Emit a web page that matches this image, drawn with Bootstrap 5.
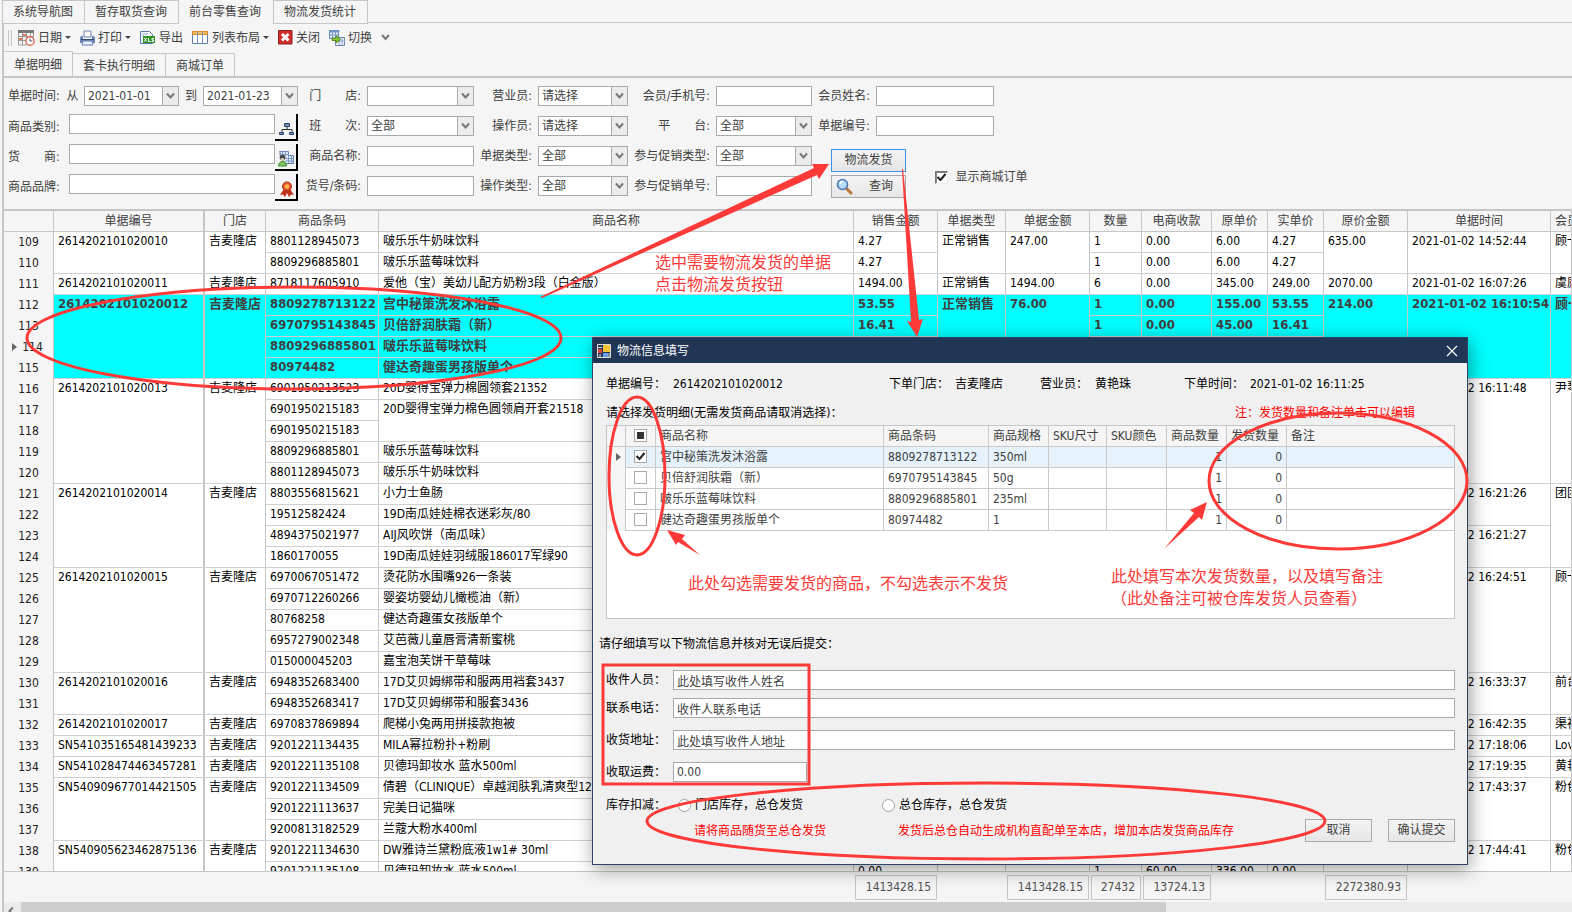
<!DOCTYPE html>
<html lang="zh-CN">
<head>
<meta charset="utf-8">
<meta name="viewport" content="width=device-width, initial-scale=1">
<title>前台零售查询</title>
<link href="https://cdn.jsdelivr.net/npm/bootstrap@5.3.0/dist/css/bootstrap.min.css" rel="stylesheet">
<style>
  :root { --line: #c6c6c6; --field: #a9a9a9; --ink: #404040; --mark-red: #fd3a37; }
  body { font-family: "DejaVu Sans Condensed", "Noto Sans CJK SC", sans-serif; font-size: 12px; line-height: 18px; color: var(--ink); background: #f5f5f5; overflow: hidden; }
  svg { flex: none; }

  /* window tabs */
  .win-tabs { height: 23px; padding-left: 2px; }
  .win-tabs::after { content: ""; flex: 1; border-bottom: 1px solid var(--line); }
  .win-tabs .nav-link, .sub-tabs .nav-link { color: var(--ink); border: 1px solid var(--line); border-radius: 0; padding: 0 10px; line-height: 22px; white-space: nowrap; }
  .win-tabs .nav-link { padding-right: 11px; }
  .win-tabs .nav-item + .nav-item .nav-link { border-left-width: 0; }
  .win-tabs .nav-item.seam .nav-link { border-left-width: 1px; }
  .win-tabs .nav-link.active { border-color: transparent; background: none; }

  /* tool bar */
  .tool-strip, .sub-tabs, .work-area { margin-left: 2px; border-left: 2px solid var(--line); }
  .tool-strip { height: 28px; padding: 2px 0 0 16px; gap: 9px; }
  .tool-strip .grip { width: 4px; height: 16px; border: solid var(--line); border-width: 0 1px; margin-left: -12px; margin-right: -3px; }
  .tool-btn { border: 0; background: none; padding: 0; display: flex; align-items: center; gap: 3px; color: var(--ink); line-height: 18px; }
  .drop-mark { border: 3px solid transparent; border-top-color: #444; border-bottom: 0; }

  .sub-tabs { height: 25px; align-items: flex-end; }
  .sub-tabs .nav-link { padding-top: 2px; line-height: 20px; border-bottom: 0; border-left-width: 0; }
  .sub-tabs .nav-link.active { line-height: 22px; background: none; }

  .work-area { border-top: 2px solid var(--line); min-height: 0; }

  /* filters */
  .filters { padding: 3px 0 8px 4px; }
  .f-row { height: 30px; display: flex; align-items: center; white-space: nowrap; }
  .f-row.top { align-items: flex-start; padding-top: 3px; }
  .f-row.top label { line-height: 26px; width: 61px; }
  .f-row.end { justify-content: flex-end; }
  .f-row.end label { margin-right: 6px; }
  .f-from { width: 76px; }
  .f-to { width: 24px; text-align: center; }
  .g-dates { width: 290px; } .g-shop { width: 176px; } .g-staff { width: 154px; } .g-member { width: 184px; } .g-buyer { width: 182px; }
  .f-cmds { padding: 8px 0 0 19px; gap: 29px; }
  .f-cmds .stack { gap: 3px; }
  .box { height: 20px; border: 1px solid var(--field); border-radius: 0; background-color: #fff; color: var(--ink); padding: 0 3px; line-height: 18px; font-size: 12px; }
  select.box { appearance: none; padding-right: 18px; background: url("data:image/svg+xml,%3Csvg xmlns='http://www.w3.org/2000/svg' width='16' height='18'%3E%3Crect width='16' height='18' fill='%23ececec'/%3E%3Cpath d='M.5 0v18' stroke='%23a9a9a9'/%3E%3Cpath d='M5 6.500l3.500 4 3.500-4' fill='none' stroke='%23777' stroke-width='2'/%3E%3C/svg%3E") right center no-repeat #fff; }
  .w-date { width: 95px; } .w-long { width: 206px; } .w-shop { width: 107px; } .w-staff { width: 90px; } .w-member { width: 96px; } .w-name { width: 118px; }
  .pick { width: 23px; height: 27px; border: solid #000; border-width: 0 2px 2px 0; background: #f5f5f5; padding: 5px 0 0 2px; display: flex; align-items: center; justify-content: center; }
  .cmd { border: 1px solid #a9a9a9; border-radius: 0; background: linear-gradient(#f4f4f4, #e6e6e6); color: var(--ink); font-size: 12px; line-height: 21px; height: 23px; padding: 0; }
  .cmd.hot { border-color: #3c94ea; }
  .cmd-wide { width: 75px; }
  .tick { appearance: none; margin: 0; width: 13px; height: 13px; border: 1px solid #a9a9a9; background: #fff center no-repeat; }
  .tick:checked { background-image: url("data:image/svg+xml,%3Csvg xmlns='http://www.w3.org/2000/svg' width='11' height='11'%3E%3Cpath d='M1.500 5l3 3L9.500 2' fill='none' stroke='%23222' stroke-width='2'/%3E%3C/svg%3E"); }
  .tick.partial { background-image: linear-gradient(#333, #333); background-size: 7px 7px; }
  .tick.sunk { border-color: #777 #eee #eee #777; box-shadow: inset 1px 1px #888; }

  /* order grid */
  .grid-wrap { border-top: 2px solid var(--line); min-height: 0; overflow: hidden; }
  .order-grid { table-layout: fixed; width: 100%; border-collapse: separate; border-spacing: 0; }
  .order-grid th, .order-grid td { height: 21px; padding: 0 4px; line-height: 18px; vertical-align: top; border: solid var(--line); border-width: 0 1px 1px 0; background: #fff; color: #000; font-weight: 400; white-space: nowrap; overflow: hidden; }
  .order-grid td { border-color: #d0d0d0; border-right-color: var(--line); }
  .order-grid th { background: #f5f5f5; color: var(--ink); text-align: center; padding: 0; line-height: 20px; }
  .order-grid tbody th { border-bottom: 0; line-height: 21px; color: #222; }
  .order-grid .pin { border-right-width: 2px; }
  .order-grid .chosen td { background: #0ff; color: #404040; font-weight: 700; font-size: 13px; }
  .c-no { width: 50px; } .c-id { width: 151px; } .c-shop { width: 61px; } .c-code { width: 113px; } .c-84 { width: 84px; } .c-type { width: 68px; } .c-qty { width: 52px; } .c-card { width: 70px; } .c-price { width: 56px; } .c-time { width: 143px; } .c-last { width: 21px; }
  .row-mark { float: left; margin: 6px -5px 0 8px; border: 4px solid transparent; border-left: 5px solid #666; border-right: 0; }

  .sums { border-top: 1px solid var(--line); height: 32px; }
  .sums table { table-layout: fixed; }
  .sums td { padding: 3px 0 0 1px; height: 28px; }
  .sums .total { display: block; height: 25px; line-height: 23px; border: 1px solid var(--line); text-align: right; padding-right: 5px; margin-right: 1px; color: #505050; }
  .h-scroll { height: 10px; background: #ebebeb; overflow: hidden; }
  .h-scroll .thumb { width: 73%; background: #cdcdcd; }

  /* dialog */
  .ship-dialog { position: absolute; left: 592px; top: 337px; width: 876px; border: 1px solid #2b4467; background: #f0f0f0; color: #000; box-shadow: 2px 4px 18px rgba(0, 0, 0, .4); }
  .ship-title { height: 25px; gap: 6px; background: #213555; color: #fff; padding: 0 9px 0 4px; }
  .ship-title button { border: 0; background: none; padding: 0; line-height: 1; }
  .ship-body { padding: 0 12px 22px 13px; }
  .facts { height: 42px; display: grid; align-items: center; grid-template-columns: 67px 216px 66px 85px 55px 89px 66px 1fr; }
  .facts span { white-space: nowrap; }
  .line-16 { line-height: 16px; }
  .pure-red { color: #f00; }
  .tip { margin-right: 40px; }
  .goods-wrap { border: 1px solid var(--line); background: #fff; height: 194px; margin-top: 4px; }
  .goods { table-layout: fixed; width: 100%; border-collapse: separate; border-spacing: 0; color: var(--ink); }
  .goods th, .goods td { height: 21px; line-height: 20px; padding: 0 4px; border: solid #c9c9c9; border-width: 0 1px 1px 0; font-weight: 400; white-space: nowrap; overflow: hidden; vertical-align: top; }
  .goods th { background: #f5f5f5; }
  .goods tr > :last-child { border-right: 0; }
  .goods tbody th { border-bottom: 0; padding: 0; }
  .goods .now td { background: #e5f1fb; }
  .goods .num { text-align: right; }
  .goods .pickbox { padding: 3px 0 0; text-align: center; line-height: 1; }
  .goods .row-mark { margin-left: 9px; }
  .g-mark { width: 19px; } .g-box { width: 30px; } .g-name { width: 228px; } .g-code { width: 105px; } .g-60 { width: 60px; } .g-58 { width: 58px; }
  .ask { margin: 17px 0 18px -7px; }
  .ship-row { display: flex; align-items: center; height: 20px; margin-bottom: 12px; }
  .ship-row label { width: 67px; }
  .ship-row .box { flex: 1; }
  .ship-row .w-fee { flex: none; width: 134px; }
  .stock { display: grid; grid-template-columns: 72px 204px 1fr; row-gap: 5px; margin-top: 14px; align-items: center; }
  .stock label { margin-left: 4px; }
  .stock .hint { padding-left: 16px; white-space: nowrap; }
  .dot { appearance: none; margin: 0; width: 13px; height: 13px; border: 1px solid #a0a0a0; border-radius: 50%; background: #fff; }
  .cmd-ship { width: 67px; }

  /* hand-drawn notes over the window */
  .notes { position: absolute; left: 0; top: 0; pointer-events: none; font-family: "Noto Sans CJK SC", sans-serif; font-size: 16px; }
  .notes .ring { fill: none; stroke: var(--mark-red); stroke-width: 3; }
  .notes .solid { fill: var(--mark-red); }
</style>
</head>
<body>
<div class="d-flex flex-column vh-100 position-relative overflow-hidden">

  <ul class="nav flex-nowrap win-tabs">
    <li class="nav-item"><a class="nav-link" href="#">系统导航图</a></li>
    <li class="nav-item"><a class="nav-link" href="#">暂存取货查询</a></li>
    <li class="nav-item"><a class="nav-link active" href="#">前台零售查询</a></li>
    <li class="nav-item seam"><a class="nav-link" href="#">物流发货统计</a></li>
  </ul>

  <div class="tool-strip d-flex align-items-center" role="toolbar">
    <span class="grip"></span>
    <button class="tool-btn" type="button">
      <svg width="17" height="16" viewBox="0 0 17 16"><path d="M0 0h16v3H0z" fill="#777"/><path d="M.5 3v12H9M.500 6.500h15M.500 10.500h8M4.500 3v12M8.500 3v9M12.500 3v4M15.500 3v4" fill="none" stroke="#999"/><path d="M5 4h3v2H5zM1 8h3v2H1z" fill="#e2765c"/><circle cx="12" cy="11" r="4.200" fill="#fff" stroke="#d96d55" stroke-width="1.400"/><path d="M12 8.500V11h2.500" fill="none" stroke="#555"/></svg>
      日期 <span class="drop-mark"></span></button>
    <button class="tool-btn" type="button">
      <svg width="15" height="16" viewBox="0 0 15 16"><path d="M4 1h7v6H4z" fill="#fff" stroke="#6780b0"/><path d="M1 6h2v3h9V6h2l1 2v5H0V8z" fill="#6d86b4"/><path d="M1 9h13v1H1z" fill="#304a79"/><path d="M3 11h9l1 4H2z" fill="#e9f0fb" stroke="#6780b0"/></svg>
      打印 <span class="drop-mark"></span></button>
    <button class="tool-btn" type="button">
      <svg width="16" height="16" viewBox="0 0 16 16"><path d="M.5 1.500h9l3 3v9H.5z" fill="#f4f8fd" stroke="#5878a8"/><path d="M2 4h6M2 6h2" stroke="#9ab1d2"/><path d="M3 6h12v7H3z" fill="#2f9128"/><path d="M4.500 8l2 3.500m0-3.500l-2 3.500M8.500 8v3.500h2M14 8.500h-2v1.500h1.500v1.500H11.500" fill="none" stroke="#fff"/></svg>
      导出</button>
    <button class="tool-btn" type="button">
      <svg width="17" height="14" viewBox="0 0 17 14"><path d="M.5.500h15v12H.5z" fill="#fff" stroke="#5c7cab"/><path d="M0 0h16v4H0z" fill="#d98c2e"/><path d="M1 1h14v2H1z" fill="#f4bd68"/><path d="M5.500 1v12M10.500 1v12" stroke="#7793bd"/></svg>
      列表布局 <span class="drop-mark"></span></button>
    <button class="tool-btn" type="button">
      <svg width="15" height="15" viewBox="0 0 15 15"><path d="M.5.500h13.500v13.500H.5z" fill="#cf2f29" stroke="#8e211d"/><path d="M4 4l6.500 6.500M10.500 4L4 10.500" stroke="#fff" stroke-width="3"/></svg>
      关闭</button>
    <button class="tool-btn" type="button">
      <svg width="16" height="16" viewBox="0 0 16 16"><path d="M.5.500h9v8h-9z" fill="#dce8f8" stroke="#5d84bb"/><path d="M0 0h10v2H0zM.500 5h9M3.500 1v7M6.500 1v7" fill="#5d84bb" stroke="#7c9dcb"/><path d="M6.500 7.500h9v8h-9z" fill="#eef3fb" stroke="#6b86b0"/><path d="M7 11h9M10 8v7M13 8v7" stroke="#8ba4cb"/><path d="M3 8h4V5.500l4.500 4L7 13v-2.500H3z" fill="#86c82f" stroke="#477a12" stroke-width=".8"/></svg>
      切换</button>
    <svg width="9" height="7" viewBox="0 0 9 7"><path d="M1 1l3.500 4L8 1" fill="none" stroke="#777" stroke-width="2"/></svg>
  </div>

  <ul class="nav flex-nowrap sub-tabs">
    <li class="nav-item"><a class="nav-link active" href="#">单据明细</a></li>
    <li class="nav-item"><a class="nav-link" href="#">套卡执行明细</a></li>
    <li class="nav-item"><a class="nav-link" href="#">商城订单</a></li>
  </ul>

  <main class="work-area d-flex flex-column flex-grow-1">
    <form class="filters d-flex">
      <div class="g-dates">
        <div class="f-row">
          <label class="f-from" for="d1">单据时间:&nbsp; 从</label>
          <select class="box w-date" id="d1"><option>2021-01-01</option></select>
          <label class="f-to" for="d2">到</label>
          <select class="box w-date" id="d2"><option>2021-01-23</option></select>
        </div>
        <div class="f-row top">
          <label for="kind">商品类别:</label><input class="box w-long" id="kind" type="text">
          <button class="pick" type="button" aria-label="选择类别"><svg width="16" height="14" viewBox="0 0 16 14"><path d="M8 4v4M3 10V7.500h10V10" fill="none" stroke="#333"/><path d="M5.500 1.500h5v3h-5zM.500 10.500h4v2h-4zM10.500 10.500h4v2h-4z" fill="#7193bf" stroke="#2c4568"/></svg></button>
        </div>
        <div class="f-row top">
          <label for="vendor">货　　商:</label><input class="box w-long" id="vendor" type="text">
          <button class="pick" type="button" aria-label="选择货商"><svg width="17" height="17" viewBox="0 0 17 17"><path d="M1.500 1.500h9v4h5v8h-9z" fill="#dfe9f7" stroke="#627ea9"/><path d="M1 4.500h10M7 8.500h9M7 11h9M4.500 1v5M7.500 1v5M10.500 5v8M13.500 5v8" stroke="#7f9ac4"/><circle cx="4.500" cy="7.500" r="2.800" fill="#444"/><path d="M3 8h3v3H3z" fill="#d9c4ae"/><path d="M.5 16c0-6 8-6 8 0z" fill="#7cc760" stroke="#3d8a2b"/></svg></button>
        </div>
        <div class="f-row top">
          <label for="brand">商品品牌:</label><input class="box w-long" id="brand" type="text">
          <button class="pick" type="button" aria-label="选择品牌"><svg width="16" height="16" viewBox="0 0 16 16"><path d="M5 8L1 14l3-.5L6 16l2-4 2 4 2-2.500 3 .5-4-6z" fill="#c2321b"/><circle cx="8" cy="5.500" r="4.500" fill="#e2552d" stroke="#a52b12"/><circle cx="8" cy="5.500" r="2.300" fill="#f7bb4a"/></svg></button>
        </div>
      </div>
      <div class="g-shop">
        <div class="f-row end"><label for="shop">门　　店:</label><select class="box w-shop" id="shop"><option></option></select></div>
        <div class="f-row end"><label for="shift">班　　次:</label><select class="box w-shop" id="shift"><option>全部</option></select></div>
        <div class="f-row end"><label for="gname">商品名称:</label><input class="box w-shop" id="gname" type="text"></div>
        <div class="f-row end"><label for="gcode">货号/条码:</label><input class="box w-shop" id="gcode" type="text"></div>
      </div>
      <div class="g-staff">
        <div class="f-row end"><label for="s1">营业员:</label><select class="box w-staff" id="s1"><option>请选择</option></select></div>
        <div class="f-row end"><label for="s2">操作员:</label><select class="box w-staff" id="s2"><option>请选择</option></select></div>
        <div class="f-row end"><label for="s3">单据类型:</label><select class="box w-staff" id="s3"><option>全部</option></select></div>
        <div class="f-row end"><label for="s4">操作类型:</label><select class="box w-staff" id="s4"><option>全部</option></select></div>
      </div>
      <div class="g-member">
        <div class="f-row end"><label for="m1">会员/手机号:</label><input class="box w-member" id="m1" type="text"></div>
        <div class="f-row end"><label for="m2">平　　台:</label><select class="box w-member" id="m2"><option>全部</option></select></div>
        <div class="f-row end"><label for="m3">参与促销类型:</label><select class="box w-member" id="m3"><option>全部</option></select></div>
        <div class="f-row end"><label for="m4">参与促销单号:</label><input class="box w-member" id="m4" type="text"></div>
      </div>
      <div class="g-buyer">
        <div class="f-row end"><label for="n1">会员姓名:</label><input class="box w-name" id="n1" type="text"></div>
        <div class="f-row end"><label for="n2">单据编号:</label><input class="box w-name" id="n2" type="text"></div>
        <div class="f-cmds d-flex align-items-center">
          <div class="stack d-flex flex-column">
            <button class="cmd cmd-wide hot" type="button">物流发货</button>
            <button class="cmd cmd-wide d-flex align-items-center" type="button">
              <svg class="ms-1 me-3" width="17" height="17" viewBox="0 0 17 17"><path d="M10 10l5 5" stroke="#b8763a" stroke-width="3" stroke-linecap="round"/><circle cx="6.500" cy="6.500" r="5" fill="#b7dcf8" stroke="#4a78b4" stroke-width="1.600"/><path d="M4 6a3 3 0 0 1 3-2.500" stroke="#fff" fill="none" stroke-width="1.500"/></svg>查询</button>
          </div>
          <div class="d-flex align-items-center text-nowrap pt-2">
            <input class="tick sunk me-1" type="checkbox" id="mall" checked><label for="mall">&nbsp;显示商城订单</label>
          </div>
        </div>
      </div>
    </form>

    <div class="grid-wrap flex-grow-1">
      <table class="order-grid">
        <colgroup><col class="c-no"><col class="c-id"><col class="c-shop"><col class="c-code"><col><col class="c-84"><col class="c-type"><col class="c-84"><col class="c-qty"><col class="c-card"><col class="c-price"><col class="c-price"><col class="c-84"><col class="c-time"><col class="c-last"></colgroup>
        <thead><tr><th></th><th class="pin">单据编号</th><th>门店</th><th>商品条码</th><th>商品名称</th><th>销售金额</th><th>单据类型</th><th>单据金额</th><th>数量</th><th>电商收款</th><th>原单价</th><th>实单价</th><th>原价金额</th><th>单据时间</th><th class="text-start ps-1">会员</th></tr></thead>
        <tbody id="orders"></tbody>
      </table>
    </div>

    <div class="sums">
      <table class="w-100">
        <colgroup><col class="c-no"><col class="c-id"><col class="c-shop"><col class="c-code"><col><col class="c-84"><col class="c-type"><col class="c-84"><col class="c-qty"><col class="c-card"><col class="c-price"><col class="c-price"><col class="c-84"><col class="c-time"><col class="c-last"></colgroup>
        <tbody><tr><td></td><td></td><td></td><td></td><td></td><td><span class="total">1413428.15</span></td><td></td><td><span class="total">1413428.15</span></td><td><span class="total">27432</span></td><td><span class="total">13724.13</span></td><td></td><td></td><td><span class="total">2272380.93</span></td><td></td><td></td></tr></tbody>
      </table>
    </div>
    <div class="h-scroll d-flex">
      <svg width="17" height="10" viewBox="0 0 17 10"><path d="M9 5.500L5.500 9 9 12.500" fill="none" stroke="#777" stroke-width="2"/></svg>
      <div class="thumb"></div>
    </div>
  </main>

  <section class="ship-dialog" role="dialog" aria-labelledby="ship-name">
    <header class="ship-title d-flex align-items-center">
      <svg width="14" height="14" viewBox="0 0 14 14"><path d="M.5.500h13v13H.5z" fill="#26385a" stroke="#ddd"/><path d="M6 1h7v7H6z" fill="#f5c330"/><path d="M1 5h4v4H1z" fill="#d94436"/><path d="M6 9h5v4H6z" fill="#6f9fe8"/><path d="M1 3.500h4M3 10v3M12 9v4" stroke="#ddd"/></svg>
      <span id="ship-name">物流信息填写</span>
      <button class="ms-auto" type="button" aria-label="关闭"><svg width="12" height="12" viewBox="0 0 12 12"><path d="M1 1l10 10M11 1L1 11" stroke="#fff" stroke-width="1.200"/></svg></button>
    </header>
    <div class="ship-body">
      <div class="facts"><span>单据编号：</span><span>2614202101020012</span><span>下单门店：</span><span>吉麦隆店</span><span>营业员：</span><span>黄艳珠</span><span>下单时间：</span><span>2021-01-02 16:11:25</span></div>
      <div class="d-flex justify-content-between line-16"><span>请选择发货明细(无需发货商品请取消选择)：</span><span class="pure-red tip">注：发货数量和备注单击可以编辑</span></div>
      <div class="goods-wrap">
        <table class="goods">
          <colgroup><col class="g-mark"><col class="g-box"><col class="g-name"><col class="g-code"><col class="g-60"><col class="g-58"><col class="g-60"><col class="g-60"><col class="g-60"><col></colgroup>
          <thead><tr><th></th><th class="pickbox"><input class="tick partial" type="checkbox" aria-label="全选"></th><th>商品名称</th><th>商品条码</th><th>商品规格</th><th>SKU尺寸</th><th>SKU颜色</th><th>商品数量</th><th>发货数量</th><th>备注</th></tr></thead>
          <tbody>
            <tr class="now"><th><span class="row-mark"></span></th><td class="pickbox"><input class="tick" type="checkbox" aria-label="宫中秘策洗发沐浴露" checked></td><td>宫中秘策洗发沐浴露</td><td>8809278713122</td><td>350ml</td><td></td><td></td><td class="num">1</td><td class="num">0</td><td></td></tr>
            <tr><th></th><td class="pickbox"><input class="tick" type="checkbox" aria-label="贝倍舒润肤霜"></td><td>贝倍舒润肤霜（新）</td><td>6970795143845</td><td>50g</td><td></td><td></td><td class="num">1</td><td class="num">0</td><td></td></tr>
            <tr><th></th><td class="pickbox"><input class="tick" type="checkbox" aria-label="啵乐乐蓝莓味饮料"></td><td>啵乐乐蓝莓味饮料</td><td>8809296885801</td><td>235ml</td><td></td><td></td><td class="num">1</td><td class="num">0</td><td></td></tr>
            <tr><th></th><td class="pickbox"><input class="tick" type="checkbox" aria-label="健达奇趣蛋男孩版单个"></td><td>健达奇趣蛋男孩版单个</td><td>80974482</td><td>1</td><td></td><td></td><td class="num">1</td><td class="num">0</td><td></td></tr>
          </tbody>
        </table>
      </div>
      <p class="ask line-16">请仔细填写以下物流信息并核对无误后提交：</p>
      <div class="ship-row mb-2"><label for="r1">收件人员：</label><input class="box" id="r1" type="text" value="此处填写收件人姓名"></div>
      <div class="ship-row"><label for="r2">联系电话：</label><input class="box" id="r2" type="text" value="收件人联系电话"></div>
      <div class="ship-row"><label for="r3">收货地址：</label><input class="box" id="r3" type="text" value="此处填写收件人地址"></div>
      <div class="ship-row mb-0"><label for="r4">收取运费：</label><input class="box w-fee" id="r4" type="text" value="0.00"></div>
      <div class="stock">
        <span>库存扣减：</span>
        <div class="d-flex align-items-center"><input class="dot" type="radio" name="stock" id="k1"><label for="k1">门店库存，总仓发货</label></div>
        <div class="d-flex align-items-center"><input class="dot" type="radio" name="stock" id="k2"><label for="k2">总仓库存，总仓发货</label></div>
        <span></span>
        <span class="hint pure-red">请将商品随货至总仓发货</span>
        <div class="d-flex align-items-center">
          <span class="hint pure-red me-auto">发货后总仓自动生成机构直配单至本店，增加本店发货商品库存</span>
          <button class="cmd cmd-ship me-3" type="button">取消</button>
          <button class="cmd cmd-ship" type="button">确认提交</button>
        </div>
      </div>
    </div>
  </section>

  <svg class="notes" width="1572" height="912" viewBox="0 0 1572 912">
    <ellipse class="ring" cx="294" cy="338" rx="267" ry="51"/>
    <ellipse class="ring" cx="637" cy="476" rx="28" ry="79"/>
    <ellipse class="ring" cx="1338" cy="481" rx="129" ry="68"/>
    <ellipse class="ring" cx="986" cy="821" rx="339" ry="38"/>
    <rect class="ring" x="603" y="665" width="206" height="119"/>
    <g class="solid">
      <path d="M540 297L814 168 812 164 829 164 819 179 817 175 542 298z"/>
      <path d="M902 169L903 169 919 320 923 319 917 337 907 321 911 322z"/>
      <path d="M667 530L685 535 682 539 700 555 678 542 676 545z"/>
      <path d="M1207 502L1190 510 1194 513 1164 549 1199 517 1202 520z"/>
      <text x="655" y="268">选中需要物流发货的单据</text>
      <text x="655" y="290">点击物流发货按钮</text>
      <text x="688" y="589">此处勾选需要发货的商品，不勾选表示不发货</text>
      <text x="1111" y="582">此处填写本次发货数量，以及填写备注</text>
      <text x="1111" y="604">（此处备注可被仓库发货人员查看）</text>
    </g>
  </svg>
</div>

<script>
  // One entry per order; lines are [barcode, name, amount, qty, card, list price, real price].
  // A null name continues the merged cell above it; times are [text, rows spanned].
  const shop = '吉麦隆店';
  const orders = [
    { id: '2614202101020010', type: '正常销售', sum: '247.00', full: '635.00', times: [['2021-01-02 14:52:44', 2]], who: '顾一',
      lines: [['8801128945073', '啵乐乐牛奶味饮料', '4.27', '1', '0.00', '6.00', '4.27'], ['8809296885801', '啵乐乐蓝莓味饮料', '4.27', '1', '0.00', '6.00', '4.27']] },
    { id: '2614202101020011', type: '正常销售', sum: '1494.00', full: '2070.00', times: [['2021-01-02 16:07:26', 1]], who: '虞庭',
      lines: [['8718117605910', '爱他（宝）美幼儿配方奶粉3段（白金版）', '1494.00', '6', '0.00', '345.00', '249.00']] },
    { id: '2614202101020012', chosen: true, type: '正常销售', sum: '76.00', full: '214.00', times: [['2021-01-02 16:10:54', 4]], who: '顾一',
      lines: [['8809278713122', '宫中秘策洗发沐浴露', '53.55', '1', '0.00', '155.00', '53.55'], ['6970795143845', '贝倍舒润肤霜（新）', '16.41', '1', '0.00', '45.00', '16.41'], ['8809296885801', '啵乐乐蓝莓味饮料'], ['80974482', '健达奇趣蛋男孩版单个']] },
    { id: '2614202101020013', times: [['2021-01-02 16:11:48', 5]], who: '尹琴',
      lines: [['6901950213523', '20D婴得宝弹力棉圆领套21352'], ['6901950215183', '20D婴得宝弹力棉色圆领肩开套21518'], ['6901950215183', null], ['8809296885801', '啵乐乐蓝莓味饮料'], ['8801128945073', '啵乐乐牛奶味饮料']] },
    { id: '2614202101020014', times: [['2021-01-02 16:21:26', 2], ['2021-01-02 16:21:27', 2]], who: '团团',
      lines: [['8803556815621', '小力士鱼肠'], ['19512582424', '19D南瓜娃娃棉衣迷彩灰/80'], ['4894375021977', 'AIJ风吹饼（南瓜味）'], ['1860170055', '19D南瓜娃娃羽绒服186017军绿90']] },
    { id: '2614202101020015', times: [['2021-01-02 16:24:51', 5]], who: '顾一',
      lines: [['6970067051472', '烫花防水围嘴926一条装'], ['6970712260266', '婴姿坊婴幼儿橄榄油（新）'], ['80768258', '健达奇趣蛋女孩版单个'], ['6957279002348', '艾芭薇儿童唇膏清新蜜桃'], ['015000045203', '嘉宝泡芙饼干草莓味']] },
    { id: '2614202101020016', times: [['2021-01-02 16:33:37', 2]], who: '前台',
      lines: [['6948352683400', '17D艾贝姆绑带和服两用裆套3437'], ['6948352683417', '17D艾贝姆绑带和服套3436']] },
    { id: '2614202101020017', times: [['2021-01-02 16:42:35', 1]], who: '渠裕', lines: [['6970837869894', '爬梯小兔两用拼接款抱被']] },
    { id: 'SN541035165481439233', times: [['2021-01-02 17:18:06', 1]], who: 'Lov', lines: [['9201221134435', 'MILA幂拉粉扑+粉刷']] },
    { id: 'SN541028474463457281', times: [['2021-01-02 17:19:35', 1]], who: '黄艳', lines: [['9201221135108', '贝德玛卸妆水 蓝水500ml']] },
    { id: 'SN540909677014421505', times: [['2021-01-02 17:43:37', 3]], who: '粉色',
      lines: [['9201221134509', '倩碧（CLINIQUE）卓越润肤乳清爽型12'], ['9201221113637', '完美日记猫咪'], ['9200813182529', '兰蔻大粉水400ml']] },
    { id: 'SN540905623462875136', times: [['2021-01-02 17:44:41', 2]], who: '粉色',
      lines: [['9201221134630', 'DW雅诗兰黛粉底液1w1# 30ml'], ['9201221135108', '贝德玛卸妆水 蓝水500ml', '0.00', '1', '60.00', '336.00', '0.00']] }
  ];
  const td = (text, span = 1, cls = '') => `<td rowspan="${span}" class="${cls}">${text || ''}</td>`;
  let no = 109, html = '';
  for (const o of orders) {
    const n = o.lines.length;
    const timeAt = {};
    o.times.reduce((at, t) => { timeAt[at] = t; return at + t[1]; }, 0);
    o.lines.forEach((l, i) => {
      html += `<tr class="${o.chosen ? 'chosen' : ''}"><th>${no === 114 ? '<span class="row-mark"></span>' : ''}${no}</th>`;
      if (i === 0) html += td(o.id, n, 'pin') + td(shop, n);
      html += td(l[0]);
      if (l[1] !== null) html += td(l[1], o.lines[i + 1] && o.lines[i + 1][1] === null ? 2 : 1);
      html += td(l[2]);
      if (i === 0) html += td(o.type, n) + td(o.sum, n);
      html += td(l[3]) + td(l[4]) + td(l[5]) + td(l[6]);
      if (i === 0) html += td(o.full, n);
      if (timeAt[i]) html += td(timeAt[i][0], timeAt[i][1]);
      if (i === 0) html += td(o.who, n);
      html += '</tr>';
      no++;
    });
  }
  document.getElementById('orders').innerHTML = html;
  document.querySelector('.partial').indeterminate = true;
</script>
<script src="https://cdn.jsdelivr.net/npm/bootstrap@5.3.0/dist/js/bootstrap.bundle.min.js"></script>
</body>
</html>
